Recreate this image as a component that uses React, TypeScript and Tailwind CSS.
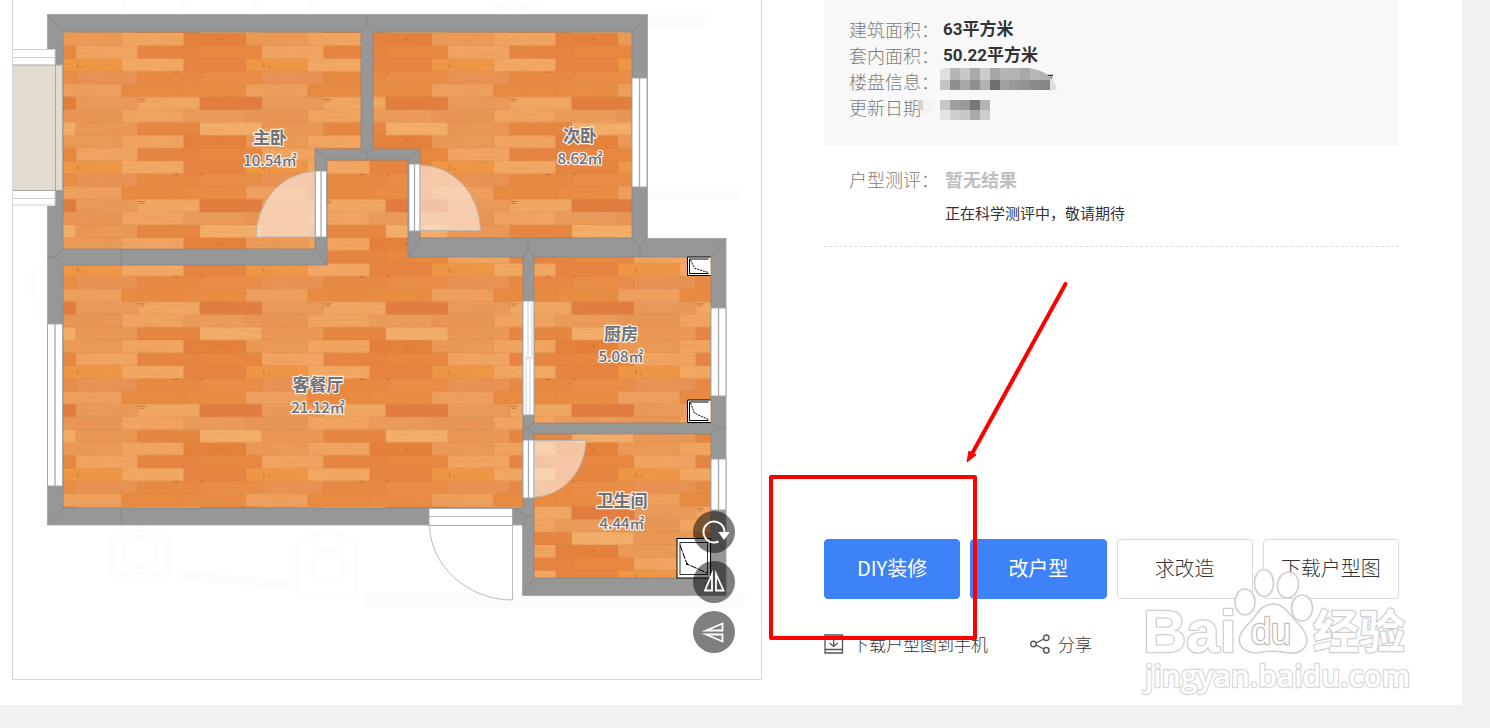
import type { ReactNode } from "react";

type Plank = { x: number; y: number; color: string };

// one texture tile: 186 x 102.4, eight rows of three planks
const PLANK_ROWS = [
  ["#f2a561", "#e5803b", "#ec9a57"],
  ["#f2a563", "#e68441", "#e98740"],
  ["#f3a964", "#e78441", "#f09746"],
  ["#e99254", "#e88943", "#ea8d47"],
  ["#e98a41", "#ea8c43", "#efa05e"],
  ["#eb9a5a", "#f1a863", "#e27c3e"],
  ["#f2a562", "#ec9c5a", "#ea9656"],
  ["#ec9856", "#e68641", "#f4af6b"],
];

const ROW_HEIGHT = 12.8;

const planks: Plank[] = PLANK_ROWS.flatMap((colors, row) =>
  [-1, 0, 1, 2, 3].map((i) => ({
    x: i * 62 + (row % 2 ? -46 : 0),
    y: row * ROW_HEIGHT,
    color: colors[(i + 3) % 3],
  }))
);

const ROOMS = [
  { name: "主卧", area: "10.54㎡", x: 270, y: 144 },
  { name: "次卧", area: "8.62㎡", x: 580, y: 142 },
  { name: "客餐厅", area: "21.12㎡", x: 318, y: 391 },
  { name: "厨房", area: "5.08㎡", x: 621, y: 340 },
  { name: "卫生间", area: "4.44㎡", x: 622, y: 507 },
];

const FLOORS = [
  "M63 32H361V149H315V249H63Z",
  "M373 32H632V238H420V149H373Z",
  "M63 265H327V160H408V257H523V508H63Z",
  "M534 257H711V423H534Z",
  "M534 434H711V578H534Z",
];

const WINDOWS = [
  { x: 47.5, y: 324, h: 162, w: 15 },
  { x: 632, y: 78, h: 109, w: 15 },
  { x: 711, y: 308, h: 88, w: 15 },
  { x: 711, y: 459, h: 51, w: 15 },
  { x: 315.5, y: 171, h: 66, w: 11 },
  { x: 409, y: 164, h: 67, w: 11 },
  { x: 523, y: 440, h: 58, w: 11 },
];

const DOORS = [
  "M315 171.5A60 66 0 0 0 256 237H315Z",
  "M420 165A61 66 0 0 1 480.500 230.500H420Z",
  "M586 440.500A53 58 0 0 1 534 497V440.500Z",
];

const JOINTS =
  "M47 15L63 32M647 15L632 32M366.500 15V23L361 32M366.500 23L373 32M726 238L711 257M47 525L63 508M726 595L711 578M523 595L534 578M47 257H55L63 249M55 257L63 265M315 249L327 265M408 257L420 238M366.500 160V153L361 149M366.500 153L373 149M327 160L315 149M409 160L420 149M528 238V247L523 257M528 247L534 257M640 257V247L632 238M640 247L647 238M523 428H528L534 423M528 428L534 434M726 428H718L711 423M718 428L711 434M512 508L528 516H534M523 525L528 516M121.500 249V265M121.500 508V525";

function FloorPlan() {
  return (
    <svg viewBox="13 0 748 679" className="block h-auto w-full" role="img" aria-label="户型图">
      <defs>
        <pattern id="wood" x="121.700" y="33" width="186" height="102.400" patternUnits="userSpaceOnUse">
          {planks.map((plank, i) => (
            <g key={i}>
              <rect x={plank.x} y={plank.y} width="62.500" height="13.200" fill={plank.color} />
              <path
                d={`M${plank.x} ${plank.y + 12.6}h62M${plank.x} ${plank.y + 1}v11.600`}
                stroke="#a8561f"
                strokeOpacity="0.280"
                strokeWidth="0.600"
              />
            </g>
          ))}
          <path d="M16 66h8M18 68h4M52 39h5M79 39h3M142 30v5M146 34h2M98 6h3" stroke="#8d451c" strokeOpacity="0.500" />
        </pattern>
        <filter id="grain" x="0" y="0" width="100%" height="100%">
          <feTurbulence type="fractalNoise" baseFrequency="0.030 0.500" numOctaves="3" seed="4" />
          <feColorMatrix values="0 0 0 0 0.700  0 0 0 0 0.280  0 0 0 0 0.060  1.600 0 0 0 -0.620" />
          <feComposite in2="SourceGraphic" operator="in" />
        </filter>
      </defs>

      {/* watermark left in the drawing */}
      <g fill="none" stroke="#fcfcfc" strokeWidth="5">
        <path d="M124 0V12H182V0M255 0V12H310V0M490 0Q510 18 544 0M36 265Q28 290 40 314" />
        <path d="M112 538Q140 520 168 538V575H112ZM298 545Q328 520 356 545V596H298Z" />
        <circle cx="140" cy="552" r="16" />
        <circle cx="328" cy="566" r="16" />
      </g>
      <path d="M647 14H708L703 27H647ZM647 186H742L738 200H647ZM180 570L300 582V590L180 580ZM365 592H747L743 608H365Z" fill="#fcfcfc" />

      <path d="M47.500 14.500H647.500V238.500H726V595.500H522.500V525H47.500Z" fill="#979797" stroke="#a9a9a9" />
      {FLOORS.map((d) => (
        <path key={d} d={d} fill="url(#wood)" />
      ))}
      <g filter="url(#grain)" opacity="0.360">
        {FLOORS.map((d) => (
          <path key={d} d={d} />
        ))}
      </g>
      {FLOORS.map((d) => (
        <path key={d} d={d} fill="none" stroke="#858585" strokeOpacity="0.700" />
      ))}
      <path d="M315.500 147V154H320V149" fill="#979797" />
      <path d={JOINTS} fill="none" stroke="#858585" strokeWidth="0.800" />

      {/* bay window */}
      <path d="M13 49H55V206H13Z" fill="#fff" />
      <path d="M13 49.500H55V65M13 57.500H55M13 198.500H55M13 205H55V191" fill="none" stroke="#cfcfcf" />
      <rect x="12" y="65" width="50.500" height="125.500" fill="#e1dccf" stroke="#a7a7a2" />
      <path d="M55.500 65V190" stroke="#aaaaa5" />

      {WINDOWS.map((win) => (
        <g key={`${win.x}-${win.y}`}>
          <rect x={win.x} y={win.y} width={win.w} height={win.h} fill="#fff" stroke="#a5a5a5" />
          <path d={`M${win.x + win.w / 2} ${win.y}v${win.h}`} stroke="#a9a9a9" strokeWidth="1.300" />
        </g>
      ))}
      <rect x="523" y="301" width="11" height="114" fill="#fff" stroke="#a5a5a5" />
      <path d="M528 301V358H532V301M526 415V358H528M530 358V415" fill="none" stroke="#cfcfcf" />

      {DOORS.map((d) => (
        <path key={d} d={d} fill="#fdeee4" fillOpacity="0.620" stroke="#bdb5b0" />
      ))}

      <rect x="429" y="508.500" width="83.500" height="17" fill="#fff" stroke="#a5a5a5" />
      <path d="M429 516.500H512.500M429.500 525C430 566 468 600 512.500 600V525" fill="none" stroke="#bbb" />

      <Flue x={687.5} y={257} w={23} h={18.5} />
      <Flue x={687.5} y={400} w={23} h={22.5} />
      <g stroke="#000">
        <rect x="677" y="538.500" width="33.500" height="39.500" fill="#fff" />
        <rect x="680" y="542.500" width="27.500" height="32" fill="#fff" stroke="#333" />
        <path d="M680 545L687 564L707 573" fill="none" strokeDasharray="7 1" />
        <circle cx="687" cy="564" r="0.800" />
      </g>

      <g
        textAnchor="middle"
        fill="#6d727b"
        stroke="#fff"
        strokeOpacity="0.850"
        strokeWidth="2.500"
        strokeLinejoin="round"
        paintOrder="stroke"
        className="font-['Noto_Sans_CJK_SC',sans-serif]"
      >
        {ROOMS.map((room) => (
          <g key={room.name}>
            <text x={room.x} y={room.y} className="text-[17px] font-bold">
              {room.name}
            </text>
            <text x={room.x} y={room.y + 22} className="text-[15px] font-medium">
              {room.area}
            </text>
          </g>
        ))}
      </g>
    </svg>
  );
}

function Flue({ x, y, w, h }: { x: number; y: number; w: number; h: number }) {
  return (
    <g stroke="#000" fill="none">
      <path d={`M${x + w} ${y}H${x}V${y + h}H${x + w}`} fill="#fff" />
      <path d={`M${x + w - 2} ${y + 2}H${x + 2}V${y + h - 2}H${x + w - 2}`} />
      <path d={`M${x + 3} ${y + 3}L${x + 7} ${y + h / 2 + 2}L${x + w - 2} ${y + h - 3}`} strokeDasharray="2 1" />
    </g>
  );
}

function ToolButton({ label, children }: { label: string; children: ReactNode }) {
  return (
    <button type="button" aria-label={label} className="flex size-[42px] items-center justify-center rounded-full bg-black/50">
      <svg viewBox="0 0 42 42" className="size-full" fill="none" stroke="#fff" strokeWidth="1.800" strokeMiterlimit="10">
        {children}
      </svg>
    </button>
  );
}

// shades of the redacted values, one per 10px cell
const NAME_CELLS = [
  ["#dfdfdf", "#b5b5b5", "#c8c8c8", "#a9a9a9", "#cccccc", "#a7a7a7", "#b5b5b5", "#b4b4b4", "#a8a8a8", "#b7b7b7", "#b0b0b0", "#dfdfdf"],
  ["#c3c3c3", "#8f8f8f", "#a8a8a8", "#8f8f8f", "#b2b2b2", "#707070", "#a0a0a0", "#989898", "#939393", "#8a8a8a", "#868686", "#dfdfdf"],
];
const DATE_CELLS = [
  ["#c8c8c8", "#9f9f9f", "#999999", "#777777", "#b3b3b3"],
  ["#e4e4e4", "#cecece", "#c8c8c8", "#aaaaaa", "#cdcdcd"],
];

function Mosaic({ cells }: { cells: string[][] }) {
  return (
    <>
      {cells.map((row, r) =>
        row.map((color, c) => <rect key={`${r}-${c}`} x={c * 10} y={r * 10} width="10" height="10" fill={color} shapeRendering="crispEdges" />)
      )}
    </>
  );
}

function InfoRow({ label, children }: { label: string; children: ReactNode }) {
  return (
    <div className="flex h-[26px] items-center">
      <dt className="w-[94px] shrink-0 font-light text-[#7d7d7d]">{label}</dt>
      <dd className="font-['Roboto','Noto_Sans_CJK_SC',sans-serif] text-[17px] font-bold text-[#333]">{children}</dd>
    </div>
  );
}

function Watermark() {
  return (
    <svg
      viewBox="0 0 280 135"
      className="pointer-events-none absolute top-[565px] right-[-21px] h-[135px] w-[280px]"
      fill="#fff"
      stroke="#cfcfcf"
      strokeWidth="1.600"
      strokeLinejoin="round"
      aria-hidden="true"
    >
      <g fillOpacity="0.850">
        <ellipse cx="105" cy="37" rx="10" ry="13" />
        <ellipse cx="124" cy="18" rx="9.500" ry="13.500" />
        <ellipse cx="148" cy="20" rx="10.500" ry="13" transform="rotate(10 148 20)" />
        <ellipse cx="162" cy="43" rx="10.500" ry="13" />
        <path d="M133 39C144 39 148 48 156 56C164 64 169 73 166 80C162 89 151 89 143 87C136 86 130 86 123 87C113 89 103 87 100 79C97 70 104 63 111 56C118 48 122 39 133 39Z" />
      </g>
      <g paintOrder="stroke" strokeWidth="2.500">
        <text x="3" y="87" className="font-['Liberation_Sans',sans-serif] text-[60px] font-bold">
          Bai
        </text>
        <text x="111" y="79" stroke="#bdbdbd" className="font-['Liberation_Sans',sans-serif] text-[36px] font-normal">
          du
        </text>
        <text x="173" y="83" className="font-['Noto_Sans_CJK_SC',sans-serif] text-[46px] font-bold">
          经验
        </text>
        <text x="5" y="122" stroke="#d8d8d8" className="font-['Open_Sans',sans-serif] text-[30px] font-semibold">
          jingyan.baidu.com
        </text>
      </g>
    </svg>
  );
}

const actionBase = "h-[60px] rounded border pb-0.5 text-xl";

export default function App() {
  return (
    <div className="min-h-screen bg-[#f1f1f1] pr-7 font-['Noto_Sans_CJK_SC',sans-serif] text-[#333]">
      <main className="grid grid-cols-[750fr_575fr] gap-[62px] overflow-hidden bg-white pr-[63px] pb-[25px] pl-3">
        <section className="relative self-start border border-t-0 border-[#d8d8d8]">
          <FloorPlan />
          <div className="absolute right-[26px] bottom-[26px] flex flex-col gap-2">
            <ToolButton label="旋转">
              <path d="M25.500 30.500A10.500 10.500 0 1 1 31.500 21" strokeWidth="2" />
              <path d="M27 22H35L31 27.500Z" fill="#fff" />
            </ToolButton>
            <ToolButton label="左右翻转">
              <path d="M19 13V29.500H12ZM23 13V29.500H30.500Z" />
            </ToolButton>
            <ToolButton label="上下翻转">
              <path d="M13 19.500L29.500 12.500V19.500ZM13 23.500H29.500V30.500Z" />
            </ToolButton>
          </div>
        </section>

        <section className="relative">
          <dl className="bg-[#f8f8f8] px-[25px] pt-4 pb-[26px] text-lg">
            <InfoRow label="建筑面积：">63平方米</InfoRow>
            <InfoRow label="套内面积：">50.22平方米</InfoRow>
            <InfoRow label="楼盘信息：">
              <svg viewBox="0 0 118 26" className="-ml-[3px] h-[26px] w-[118px]">
                <path d="M104 7.500H113M111 9V13" stroke="#333" strokeWidth="1.500" />
                <clipPath id="name-mask">
                  <path d="M0 2Q2 0 8 0H88Q112 3 117 22H0Z" />
                </clipPath>
                <g clipPath="url(#name-mask)">
                  <Mosaic cells={NAME_CELLS} />
                  <g transform="translate(0 2)">
                    <Mosaic cells={NAME_CELLS} />
                  </g>
                </g>
              </svg>
            </InfoRow>
            <div className="flex h-[26px] items-center">
              <dt className="flex w-[91px] shrink-0 items-center font-light text-[#7d7d7d]">
                更新日期
                <svg viewBox="0 0 16 14" className="-ml-1 h-[14px] w-4">
                  <path d="M0 0H6V10H2Z" fill="#d3d3d3" />
                  <path d="M6 0H16V11L12 14H4V10H6Z" fill="#f3f3f3" />
                </svg>
              </dt>
              <dd>
                <svg viewBox="0 0 50 20" className="mt-1.5 h-5 w-[50px]">
                  <Mosaic cells={DATE_CELLS} />
                </svg>
              </dd>
            </div>
          </dl>

          <div className="flex border-b border-dashed border-[#dcdcdc] px-[25px] pt-5 pb-[21px]">
            <span className="w-24 shrink-0 text-lg/[26px] font-light text-[#7d7d7d]">户型测评：</span>
            <div>
              <strong className="block text-lg/[26px] font-bold text-[#bfbfbf]">暂无结果</strong>
              <p className="mt-2 text-[15px]/[25px]">正在科学测评中，敬请期待</p>
            </div>
          </div>

          <div className="mt-[292px] grid grid-cols-4 gap-[10px]">
            <button type="button" className={`${actionBase} border-[#3e82f7] bg-[#3e82f7] text-white`}>
              DIY装修
            </button>
            <button type="button" className={`${actionBase} border-[#3e82f7] bg-[#3e82f7] text-white`}>
              改户型
            </button>
            <button type="button" className={`${actionBase} border-[#dadada] bg-white font-light`}>
              求改造
            </button>
            <button type="button" className={`${actionBase} border-[#dadada] bg-white font-light`}>
              下载户型图
            </button>
          </div>

          <div className="mt-8 flex gap-[42px] text-[17px]/[26px] font-light">
            <a href="#download" className="flex items-center gap-2">
              <svg viewBox="0 0 20 20" className="size-5" fill="none" stroke="#555" strokeWidth="1.300">
                <path d="M1 1H18.500V19H1ZM1 15.500H18.500M9.700 5V12M5.700 9L9.700 12.500L13.700 9" />
              </svg>
              下载户型图到手机
            </a>
            <a href="#share" className="flex items-center gap-2">
              <svg viewBox="0 0 20 20" className="size-5" fill="none" stroke="#555" strokeWidth="1.400">
                <circle cx="3.500" cy="10" r="2.800" />
                <circle cx="16.300" cy="3.800" r="2.800" />
                <circle cx="16.300" cy="16.300" r="2.800" />
                <path d="M6 9L13.800 5M6 11L13.800 15" />
              </svg>
              分享
            </a>
          </div>

          <div className="pointer-events-none absolute top-[475px] -left-[55px] h-[165px] w-[208px] rounded-xs border-4 border-[#ff0000]" />
          <svg viewBox="0 0 110 190" className="pointer-events-none absolute top-[280px] left-[136px] h-[190px] w-[110px]" aria-hidden="true">
            <path d="M105.500 4L13 172" stroke="#ff0000" strokeWidth="4" strokeLinecap="round" />
            <path d="M7 182L9 171L16 175Z" fill="#ff0000" stroke="#ff0000" />
          </svg>
          <Watermark />
        </section>
      </main>
    </div>
  );
}
